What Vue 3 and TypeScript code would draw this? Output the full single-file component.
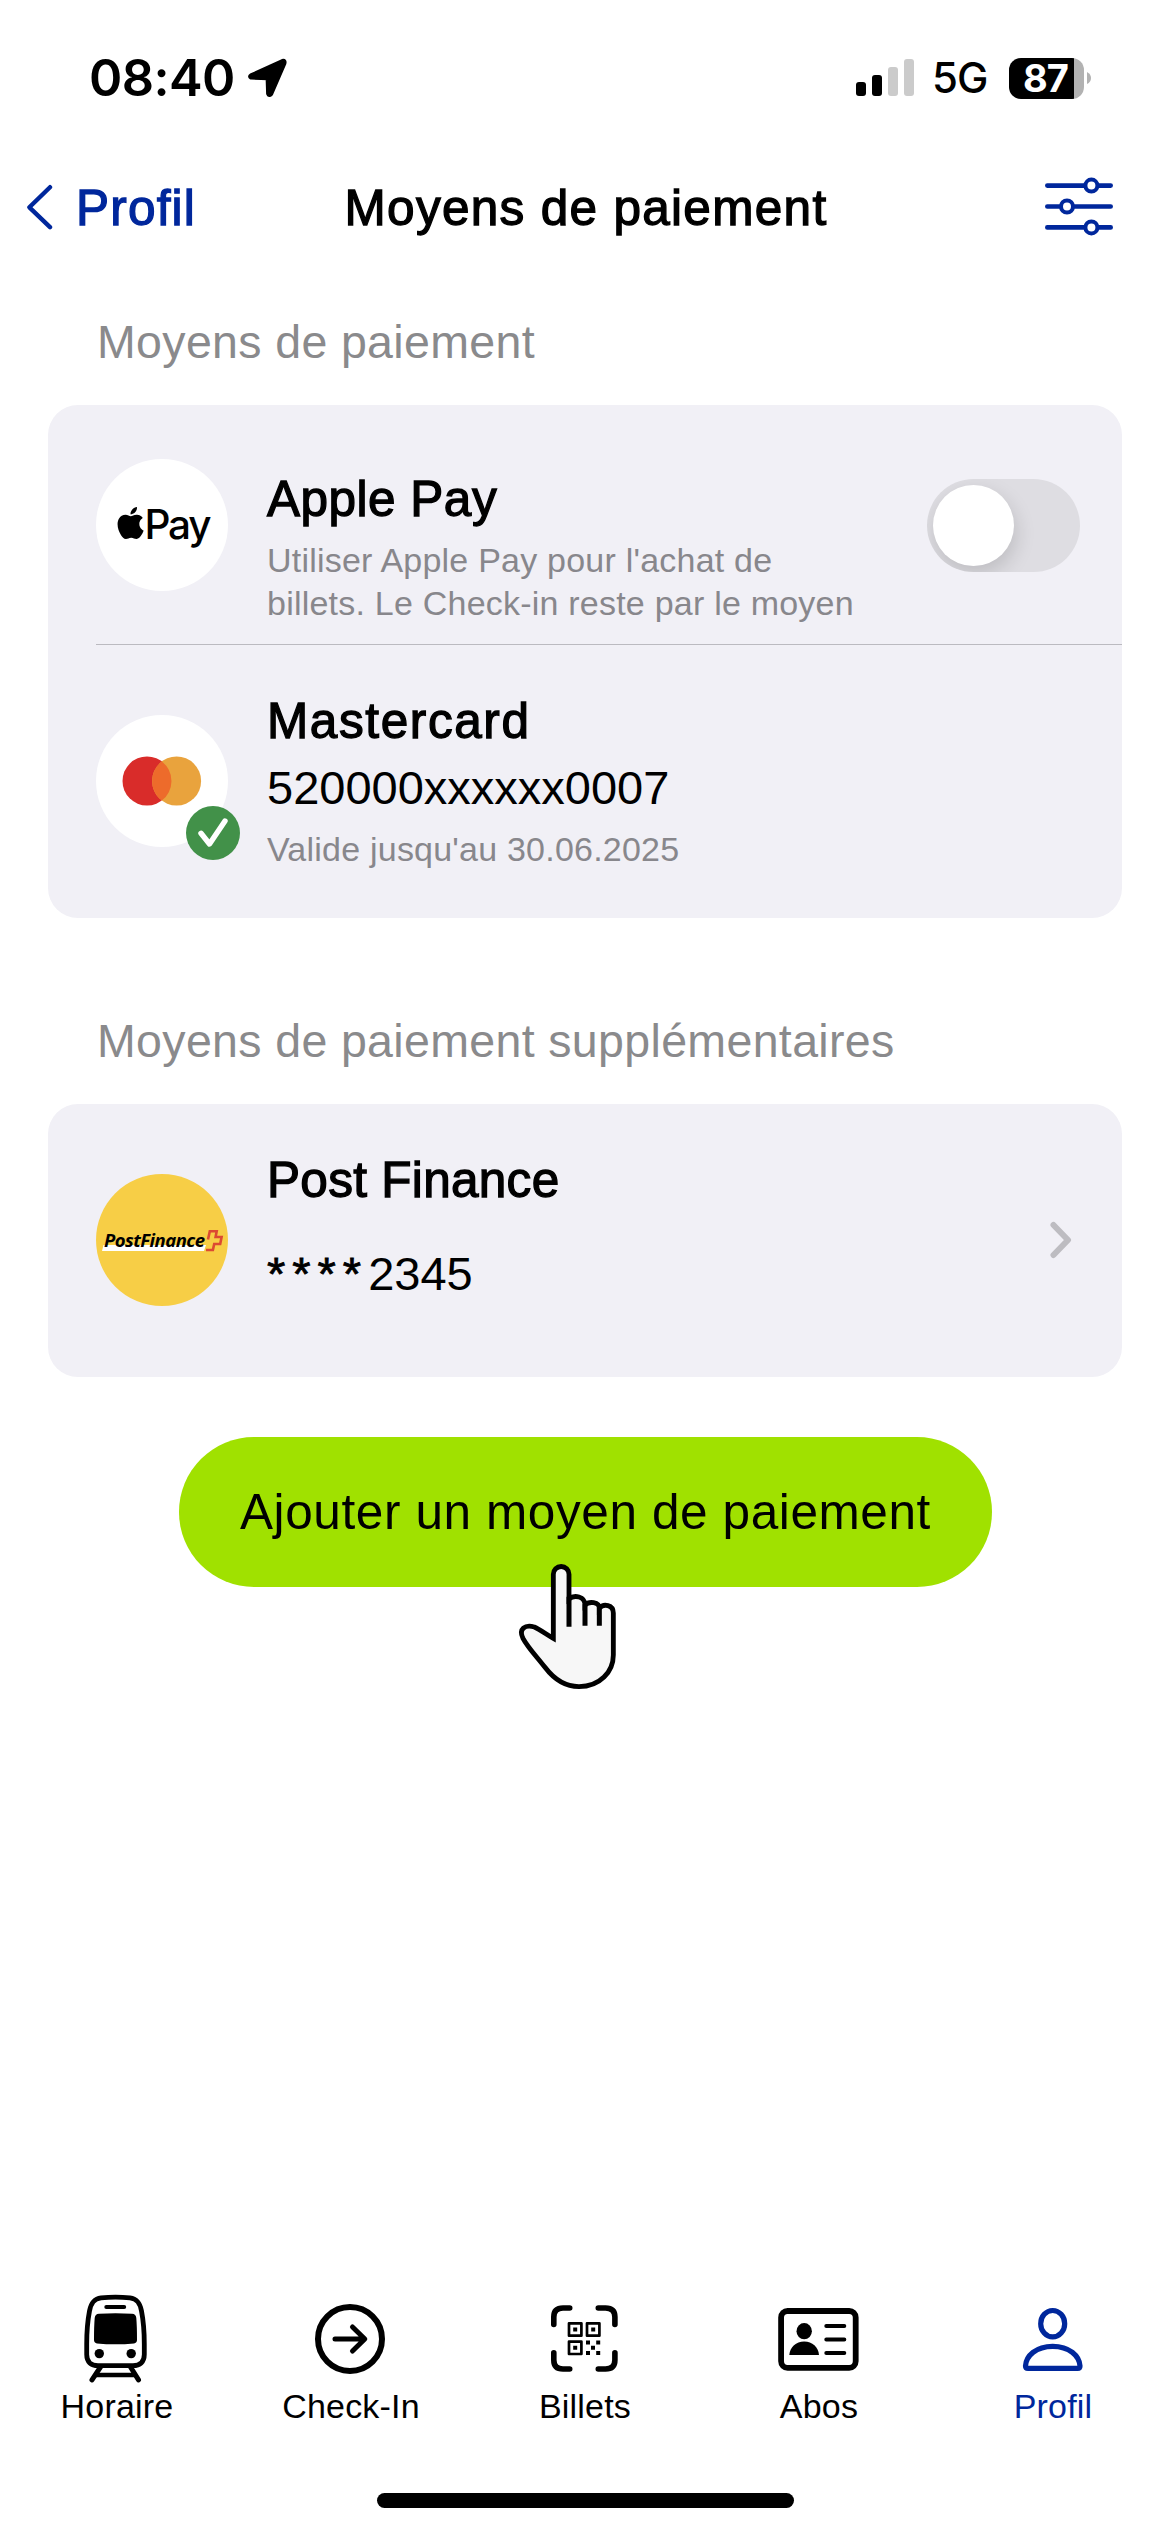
<script setup lang="ts">
import { ref } from 'vue'

interface Tab {
  id: string
  label: string
}

const applePayEnabled = ref(false)
const activeTab = ref('profil')

const tabs: Tab[] = [
  { id: 'horaire', label: 'Horaire' },
  { id: 'checkin', label: 'Check-In' },
  { id: 'billets', label: 'Billets' },
  { id: 'abos', label: 'Abos' },
  { id: 'profil', label: 'Profil' },
]
</script>

<template>
  <div class="screen">
    <div class="status">
      <div class="status-left">
        <span class="clock">08:40</span>
        <svg class="location" width="40" height="40" viewBox="0 0 40 40">
          <path d="M4 17.600 L35.500 3.200 Q38 2.400 37.200 5.400 L24 36 Q22 38 21.300 35.600 L20.800 20 L4 19.400 Q2.500 18.500 4 17.600Z" fill="#000" stroke="#000" stroke-width="4.400" stroke-linejoin="round" />
        </svg>
      </div>
      <div class="status-right">
        <svg width="58" height="38" viewBox="0 0 58 38">
          <rect x="0" y="23" width="10" height="14" rx="3" fill="#000" />
          <rect x="16" y="16" width="10" height="21" rx="3" fill="#000" />
          <rect x="32" y="8" width="10" height="29" rx="3" fill="#cbcbcb" />
          <rect x="48" y="0" width="10" height="37" rx="3" fill="#cbcbcb" />
        </svg>
        <span class="network">5G</span>
        <div class="battery">
          <div class="battery-body"><span>87</span></div>
          <svg width="4" height="12" viewBox="0 0 4 12"><path d="M0 0 Q4 2 4 6 Q4 10 0 12Z" fill="#b2b2b2" /></svg>
        </div>
      </div>
    </div>

    <header class="nav">
      <button class="back">
        <svg width="27" height="46" viewBox="0 0 27 46">
          <path d="M23 3.200 L2.400 23.300 L23 43.200" fill="none" stroke="#00279c" stroke-width="4.400" stroke-linecap="round" stroke-linejoin="round" />
        </svg>
        <span>Profil</span>
      </button>
      <h1>Moyens de paiement</h1>
      <button class="filter">
        <svg width="68" height="60" viewBox="0 0 68 60" fill="#fff" stroke="#00279c" stroke-width="4.600" stroke-linecap="round">
          <path d="M2.300 8.600H65.700M2.300 29.500H65.700M2.300 50.400H65.700" />
          <circle cx="46.400" cy="8.600" r="6" stroke-width="4" />
          <circle cx="22" cy="29.500" r="6" stroke-width="4" />
          <circle cx="46.400" cy="50.400" r="6" stroke-width="4" />
        </svg>
      </button>
    </header>

    <h2 class="label">Moyens de paiement</h2>
    <section class="card">
      <div class="row row-apple">
        <svg class="logo" width="132" height="132" viewBox="0 0 132 132">
          <circle cx="66" cy="66" r="66" fill="#fff" />
          <path transform="translate(18.6 48) scale(1.333)" d="M12.152 6.896c-.948 0-2.415-1.078-3.96-1.04-2.04.027-3.91 1.183-4.961 3.014-2.117 3.675-.546 9.103 1.519 12.09 1.013 1.454 2.208 3.09 3.792 3.039 1.52-.065 2.09-.987 3.935-.987 1.831 0 2.35.987 3.96.948 1.637-.026 2.676-1.48 3.676-2.948 1.156-1.688 1.636-3.325 1.662-3.415-.039-.013-3.182-1.221-3.22-4.857-.026-3.04 2.48-4.494 2.597-4.559-1.429-2.09-3.623-2.324-4.39-2.376-2-.156-3.675 1.09-4.61 1.09zM15.53 3.83c.843-1.012 1.4-2.427 1.245-3.83-1.207.052-2.662.805-3.532 1.818-.78.896-1.454 2.338-1.273 3.714 1.338.104 2.715-.688 3.559-1.701" />
          <text x="48.500" y="80" class="pay" textLength="67">Pay</text>
        </svg>
        <div class="info">
          <h3>Apple Pay</h3>
          <p class="note">Utiliser Apple Pay pour l'achat de<br />billets. Le Check-in reste par le moyen</p>
        </div>
        <button class="toggle" :class="{ on: applePayEnabled }" @click="applePayEnabled = !applePayEnabled">
          <span class="knob"></span>
        </button>
      </div>
      <div class="divider"></div>
      <div class="row row-card">
        <div class="logo-wrap">
          <svg class="logo" width="132" height="132" viewBox="0 0 132 132">
            <circle cx="66" cy="66" r="66" fill="#fff" />
            <circle cx="51" cy="66" r="24.500" fill="#d92c2a" />
            <circle cx="80.600" cy="66" r="24.500" fill="#e9a33d" />
            <path d="M65.800 46.500 A24.500 24.500 0 0 1 65.800 85.500 A24.500 24.500 0 0 1 65.800 46.500Z" fill="#ed6b2b" />
          </svg>
          <svg class="badge" width="54" height="54" viewBox="0 0 54 54">
            <circle cx="27" cy="27" r="27" fill="#429149" />
            <path d="M15 27.300 L23.500 38 L39 15" fill="none" stroke="#fff" stroke-width="5.400" stroke-linecap="round" stroke-linejoin="round" />
          </svg>
        </div>
        <div class="info">
          <h3 class="t-master">Mastercard</h3>
          <p class="number">520000xxxxxx0007</p>
          <p class="note">Valide jusqu'au 30.06.2025</p>
        </div>
      </div>
    </section>

    <h2 class="label label-extra">Moyens de paiement supplémentaires</h2>
    <section class="card">
      <div class="row row-card">
        <svg class="logo" width="132" height="132" viewBox="0 0 132 132">
          <circle cx="66" cy="66" r="66" fill="#f7ce46" />
          <path d="M7.500 71 H110 L108 77 H6Z" fill="#fff" />
          <text x="8" y="72.600" class="postfinance" textLength="101">PostFinance</text>
          <path d="M112 65.500 L113.800 57.300 H120.700 L119.600 63 H125.600 L124.200 70 H118.200 L116.900 76 H110" fill="none" stroke="#dc4a32" stroke-width="2.600" />
        </svg>
        <div class="info">
          <h3 class="t-post">Post Finance</h3>
          <p class="number masked"><span class="stars">****</span>2345</p>
        </div>
        <svg class="chevron" width="22" height="38" viewBox="0 0 22 38">
          <path d="M3.500 4 L18 19 L3.500 34" fill="none" stroke="#bdbcc1" stroke-width="6" stroke-linecap="round" stroke-linejoin="round" />
        </svg>
      </div>
    </section>

    <button class="add">
      <span>Ajouter un moyen de paiement</span>
      <svg class="hand" width="130" height="145" viewBox="0 0 390 435">
        <path d="M145 250 V58 A23.500 23.500 0 0 1 192 58 V132 C208 118 240 124 240 150 C252 138 283 140 283 160 C296 144 325 150 325 174 V300 C325 350 285 395 222 395 C180 395 145 370 120 337 C95 304 70 280 54 250 C40 222 60 208 88 216 C106 224 125 239 145 250Z" fill="#f7f7f7" stroke="#000" stroke-width="14.500" />
        <path d="M192 125 V215.500 M240 148 V212.500 M283 158 V212.500" fill="none" stroke="#000" stroke-width="15" />
      </svg>
    </button>

    <nav class="tabs">
      <a v-for="tab in tabs" :key="tab.id" class="tab" :class="{ active: tab.id === activeTab }" @click="activeTab = tab.id">
        <svg v-if="tab.id === 'horaire'" width="100" height="100" viewBox="0 0 100 100" fill="none" stroke="currentColor" stroke-width="4.800">
          <path d="M34 13.900 Q48.500 12.500 63 13.900 C70 14.800 73 19 74.500 27 C77 40 77.300 50 77.300 60 V70.500 C77.300 78 73 81.700 66 81.700 H31 C24 81.700 19.700 78 19.700 70.500 V60 C19.700 50 20 40 22.500 27 C24 19 27 14.800 34 13.900Z" />
          <path d="M39.300 23 H57.200" stroke-width="4" stroke-linecap="round" />
          <path d="M32 29.800 Q48.500 28.700 65 29.800 Q69 30 69.300 34 Q70 42 70 56 Q70 59 67 59.400 Q48.500 61.200 30 59.400 Q27 59 27 56 Q27 42 27.700 34 Q28 30 32 29.800Z" fill="currentColor" stroke="none" />
          <circle cx="32.300" cy="69.600" r="4.700" fill="currentColor" stroke="none" />
          <circle cx="64.200" cy="69.600" r="4.700" fill="currentColor" stroke="none" />
          <path d="M33.500 83 L25 95.800 M63.500 83 L71.500 95.800" stroke-width="5" stroke-linecap="round" />
          <path d="M29 91 H68" stroke-width="4.400" />
        </svg>
        <svg v-else-if="tab.id === 'checkin'" width="100" height="100" viewBox="0 0 100 100" fill="none" stroke="currentColor" stroke-width="6">
          <circle cx="49" cy="55" r="32" />
          <path d="M34 55 H62 M51.500 43 L63.800 55 L51.500 67" stroke-width="5" stroke-linecap="round" stroke-linejoin="round" />
        </svg>
        <svg v-else-if="tab.id === 'billets'" width="100" height="100" viewBox="0 0 100 100" fill="none" stroke="currentColor">
          <path d="M34.700 24 H28 Q18.800 24 18.800 33 V40.500 M63.300 24 H70.500 Q79.900 24 79.900 33 V40.500 M18.800 68.800 V76 Q18.800 85 28 85 H34.700 M79.900 68.800 V76 Q79.900 85 70.500 85 H63.300" stroke-width="5.600" stroke-linecap="round" />
          <path d="M34 39.300 H46.400 V51.700 H34Z M52 39.300 H64.400 V51.700 H52Z M34 57.600 H46.400 V70 H34Z" stroke-width="2.700" stroke-linejoin="round" />
          <path d="M38.200 43.500h4v4h-4z M56.200 43.500h4v4h-4z M38.200 61.800h4v4h-4z M51 56.500h4v4h-4z M61.200 56.500h4v4h-4z M56 61.800h4v4h-4z M51 67h4v4h-4z M61.200 67h4v4h-4z" fill="currentColor" stroke="none" />
        </svg>
        <svg v-else-if="tab.id === 'abos'" width="100" height="100" viewBox="0 0 100 100" fill="none" stroke="currentColor">
          <rect x="12.100" y="27" width="74.600" height="56.800" rx="6.500" stroke-width="5.800" />
          <ellipse cx="35.200" cy="47.200" rx="7.700" ry="8.100" fill="currentColor" stroke="none" />
          <path d="M20.300 71 C21 63 27 57.600 35.200 57.600 C43.400 57.600 49.300 63 50 71Z" fill="currentColor" stroke="none" />
          <path d="M57.300 42 H75.300 M57.300 55.600 H75.300 M57.300 69 H75.300" stroke-width="4" stroke-linecap="round" />
        </svg>
        <svg v-else width="100" height="100" viewBox="0 0 100 100" fill="none" stroke="currentColor" stroke-width="5.200">
          <ellipse cx="49.700" cy="39.700" rx="12" ry="13.200" />
          <path d="M22.500 82 C23 72 33 62.300 49.700 62.300 C66.400 62.300 76.400 72 77 82 Q77 84.400 74.700 84.400 H25 Q22.500 84.400 22.500 82Z" />
        </svg>
        <span>{{ tab.label }}</span>
      </a>
    </nav>
    <div class="home-indicator"></div>
  </div>
</template>

<style>
body {
  margin: 0;
  background: #fff;
}
</style>

<style scoped>
.screen {
  width: 1170px;
  height: 2532px;
  box-sizing: border-box;
  display: flex;
  flex-direction: column;
  background: #fff;
  color: #000;
  font-family: "Liberation Sans", Arial, sans-serif;
  overflow: hidden;
}
h1, h2, h3, p {
  margin: 0;
  font-weight: 400;
}
button {
  border: 0;
  padding: 0;
  background: none;
  font: inherit;
  color: inherit;
}
svg {
  display: block;
  flex: none;
}
.status {
  display: flex;
  justify-content: space-between;
  height: 60px;
  padding: 48px 79px 0 89px;
  font-family: Inter, sans-serif;
  line-height: 60px;
}
.status-left, .status-right {
  display: flex;
  align-items: center;
}
.clock {
  width: 158px;
  font-size: 50.5px;
  font-weight: 600;
  letter-spacing: -0.6px;
}
.network {
  width: 77px;
  margin-left: 16px;
  font-size: 42px;
  font-weight: 500;
  letter-spacing: -1px;
}
.status-right > svg {
  margin-right: 2px;
}
.battery {
  display: flex;
  align-items: center;
  gap: 3px;
}
.battery-body {
  width: 75px;
  height: 41px;
  border-radius: 12px;
  background: linear-gradient(90deg, #000 65px, #b2b2b2 65px);
  color: #fff;
  font-size: 38px;
  font-weight: 700;
  line-height: 41px;
}
.battery-body span {
  margin-left: 14px;
  letter-spacing: -1px;
}
.nav {
  display: grid;
  grid-template-columns: 1fr auto 1fr;
  align-items: center;
  height: 198px;
  padding: 0 57px 0 27px;
}
.nav h1 {
  padding-top: 2px;
  font-size: 49.5px;
  letter-spacing: 1.3px;
  line-height: 60px;
  margin-left: 32px;
  -webkit-text-stroke: 1.3px currentColor;
}
.back {
  display: flex;
  align-items: center;
  gap: 22px;
  color: #00279c;
  font-size: 49.5px;
  line-height: 60px;
  letter-spacing: 1.2px;
  -webkit-text-stroke: 1.3px currentColor;
}
.back span {
  padding-top: 2px;
}
.filter {
  justify-self: end;
}
.label {
  margin: 6px 0 33px 97px;
  font-size: 46.5px;
  line-height: 60px;
  letter-spacing: 0.35px;
  color: #8a8a8c;
}
.label-extra {
  margin-top: 93px;
}
.card {
  width: 1074px;
  margin-left: 48px;
  border-radius: 30px;
  background: #f1f0f6;
}
.row {
  display: flex;
  box-sizing: border-box;
  padding: 0 42px 0 48px;
}
.row-apple {
  height: 239px;
}
.row-card {
  height: 273px;
}
.row-apple .logo {
  margin-top: 54px;
}
.row-card > .logo, .logo-wrap {
  margin-top: 70px;
}
.logo-wrap {
  position: relative;
  height: 132px;
}
.badge {
  position: absolute;
  left: 90px;
  top: 91px;
}
.divider {
  height: 1px;
  margin-left: 48px;
  background: #bbbac0;
}
.info {
  flex: 1;
  margin-left: 39px;
  padding-top: 46px;
  white-space: nowrap;
}
.row-apple .info {
  padding-top: 64px;
}
.info h3 {
  font-size: 49.5px;
  line-height: 60px;
  letter-spacing: 0.5px;
  -webkit-text-stroke: 1.3px currentColor;
}
.info .t-master {
  letter-spacing: 1.6px;
}
.info .t-post {
  letter-spacing: 0.3px;
}
.number {
  margin-top: 7px;
  font-size: 47px;
  line-height: 60px;
}
.masked {
  margin-top: 34px;
}
.stars {
  letter-spacing: 7px;
  -webkit-text-stroke: 0.8px currentColor;
}
.note {
  margin-top: 10px;
  font-size: 34px;
  line-height: 43px;
  letter-spacing: 0.22px;
  color: #88878c;
}
.toggle {
  display: flex;
  width: 153px;
  height: 93px;
  box-sizing: border-box;
  margin-top: 74px;
  padding: 6px;
  border-radius: 47px;
  background: #dedde2;
  overflow: hidden;
}
.toggle.on {
  justify-content: flex-end;
}
.knob {
  width: 81px;
  height: 81px;
  border-radius: 50%;
  background: #fff;
  box-shadow: 2px 8px 20px rgba(0, 0, 0, 0.15);
}
.chevron {
  margin: 117px 8px 0 0;
}
.pay {
  font: 500 40.5px Inter, sans-serif;
}
.postfinance {
  font: italic 700 18.5px "Open Sans", sans-serif;
}
.add {
  position: relative;
  width: 813px;
  height: 150px;
  margin: 60px 0 0 179px;
  border-radius: 75px;
  background: #a0e100;
  font-size: 49.5px;
  letter-spacing: 0.6px;
  line-height: 60px;
  padding-bottom: 1px;
}
.hand {
  position: absolute;
  left: 326px;
  top: 118px;
}
.tabs {
  display: flex;
  margin-top: auto;
}
.tab {
  width: 234px;
  display: flex;
  flex-direction: column;
  align-items: center;
  font-size: 34px;
  line-height: 44px;
  letter-spacing: 0.2px;
}
.tab.active {
  color: #00279c;
}
.home-indicator {
  width: 417px;
  height: 15px;
  margin: 65px auto 24px;
  border-radius: 8px;
  background: #000;
}
</style>
